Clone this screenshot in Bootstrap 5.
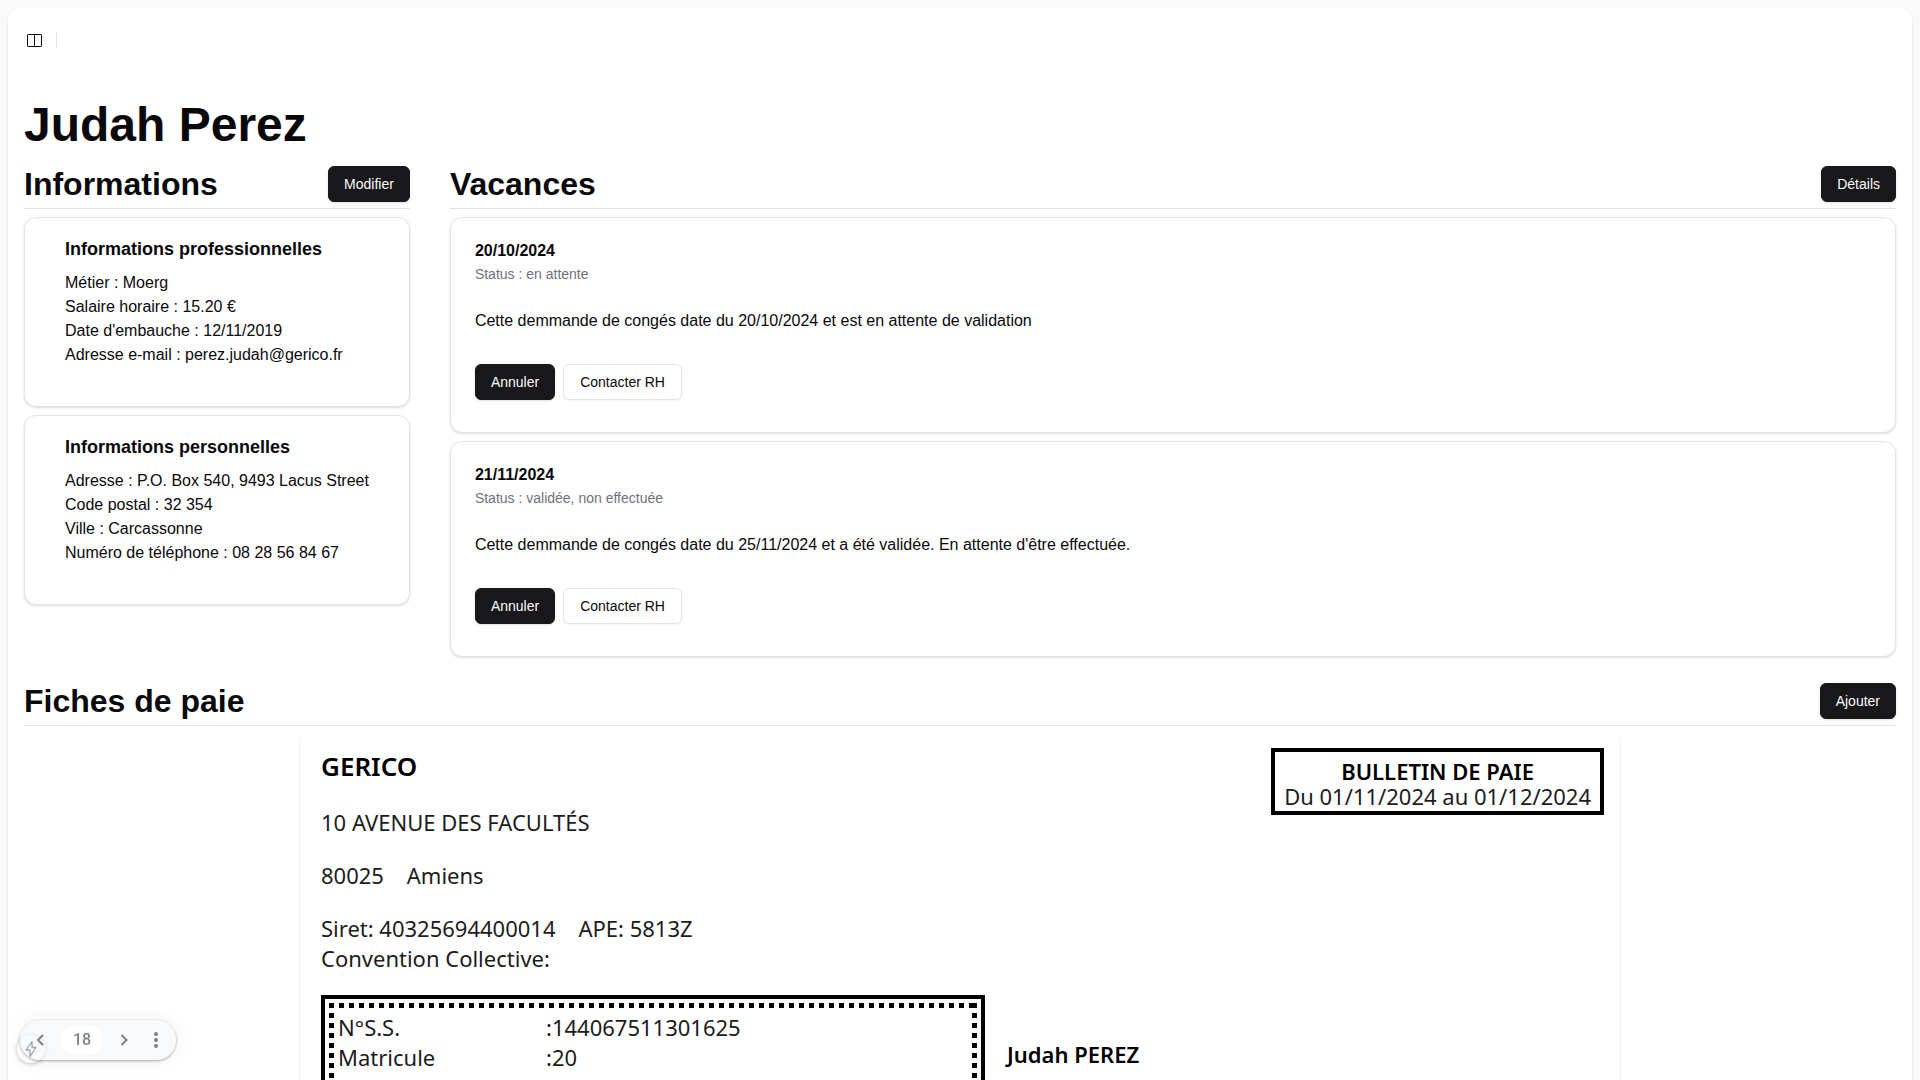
<!DOCTYPE html>
<html lang="fr">
<head>
<meta charset="utf-8">
<meta name="viewport" content="width=device-width, initial-scale=1">
<title>Judah Perez</title>
<link rel="stylesheet" href="https://cdn.jsdelivr.net/npm/bootstrap@5.3.0/dist/css/bootstrap.min.css">
<style>
  body { font-family: "Liberation Sans", Arial, sans-serif; font-size: 16px; line-height: 24px; color: #09090b; background: #fafafa; height: 100vh; overflow: hidden; }
  .app-panel { margin: 8px; border-radius: 12px; background: #fff; box-shadow: 0 1px 3px rgba(0,0,0,.1), 0 1px 2px -1px rgba(0,0,0,.1); }
  .app-header { height: 64px; padding: 0 16px; gap: 8px; }
  .toggle-btn { width: 28px; height: 28px; margin-left: -4px; padding: 0; border: 0; background: none; color: #09090b; }
  .toggle-btn svg { width: 16px; height: 16px; }
  .v-rule { width: 1px; height: 16px; background: #e4e4e7; }
  .app-content { padding: 29px 16px 16px; }
  h1 { font-size: 48px; line-height: 48px; font-weight: 700; margin: 0 0 17px; }
  .section-head { border-bottom: 1px solid #e4e4e7; padding-bottom: 6px; margin-bottom: 8px; }
  h2 { font-size: 32px; line-height: 36px; font-weight: 700; margin: 0; }
  .btn { font-size: 14px; line-height: 20px; padding: 7px 15px; border-radius: 6px; box-shadow: 0 1px 2px rgba(0,0,0,.05); }
  .btn-ink { --bs-btn-color: #fafafa; --bs-btn-bg: #18181b; --bs-btn-border-color: #18181b; --bs-btn-hover-color: #fafafa; --bs-btn-hover-bg: #2f2f31; box-shadow: 0 1px 3px rgba(0,0,0,.1), 0 1px 2px -1px rgba(0,0,0,.1); }
  .btn-line { --bs-btn-color: #09090b; --bs-btn-bg: #fff; --bs-btn-border-color: #e4e4e7; --bs-btn-hover-bg: #f4f4f5; padding: 7px 16px; }
  .card { border: 1px solid #e4e4e7; border-radius: 12px; box-shadow: 0 1px 3px rgba(0,0,0,.1), 0 1px 2px -1px rgba(0,0,0,.1); color: inherit; }
  .columns { gap: 40px; margin-bottom: 26px; }
  .info-card { padding: 17px 40px 39px; }
  .info-card h3 { font-size: 18px; line-height: 28px; font-weight: 700; margin: 0 0 8px; }
  .leave-card { padding: 25px 24px 32px; }
  .leave-card h3 { font-size: 16px; line-height: 16px; font-weight: 700; margin: 0 0 5px; }
  .leave-status { font-size: 14px; line-height: 20px; color: #71717a; margin: 0 0 25px; }
  .leave-text { margin: 0 0 31px; }

  .payslip { width: 1322px; max-width: 100%; margin: 15px auto 0; padding: 7px 16px 0 21px; border: 1px solid #f4f4f5; border-top: 0; font-family: "Noto Sans", "Open Sans", sans-serif; font-size: 22px; line-height: 30px; color: #1c1c1c; }
  .payslip strong { font-weight: 600; color: #000; }
  .company-name { font-size: 26px; line-height: 36px; }
  .issuer p { margin: 0; }
  .issuer .stack-line { margin-top: 23px; }
  .period-box { border: 4px solid #000; padding: 7px 9px 2px; line-height: 25px; }
  .person-row { gap: 22px; margin-top: 22px; }
  .identity { width: 664px; border: 4px solid #000; padding: 4px; }
  .identity dl {
    --dots-x: repeating-linear-gradient(90deg, #000 0 5px, transparent 5px 10px);
    --dots-y: repeating-linear-gradient(#000 0 5px, transparent 5px 10px);
    background: var(--dots-x) top / 100% 5px no-repeat, var(--dots-y) left / 5px 100% no-repeat, var(--dots-y) right / 5px 100% no-repeat;
    padding: 9px; margin: 0; display: grid; grid-template-columns: 208px 1fr;
  }
  .identity dt { font-weight: 400; }
  .identity dd { margin: 0; }
  .person-name { margin-top: 44px; }

  .slide-nav { left: 20px; bottom: 20px; height: 40px; width: 156px; border-radius: 20px; background: rgba(240,243,246,.5); color: #7d828a; box-shadow: 0 1px 3px rgba(0,0,0,.35), 0 0 24px rgba(0,0,0,.06); font-family: Roboto, sans-serif; z-index: 2; }
  .slide-nav button { border: 0; background: none; padding: 0; color: inherit; width: 32px; height: 32px; }
  .slide-nav svg, .flash-btn svg { display: block; margin: auto; }
  .page-no { width: 44px; height: 28px; border-radius: 14px; background: #fff; line-height: 28px; font-weight: 500; }
  .flash-btn { left: 17px; bottom: 17px; width: 28px; height: 28px; border: 0; padding: 0; border-radius: 50%; background: #fff; box-shadow: 0 1px 4px rgba(0,0,0,.25); color: #555; z-index: 1; }
</style>
</head>
<body>
<main class="app-panel">
  <header class="app-header d-flex align-items-center">
    <button class="toggle-btn d-flex align-items-center justify-content-center" type="button" aria-label="Menu">
      <svg viewBox="0 0 16 16" fill="none" stroke="currentColor"><rect x="1.5" y="2.5" width="14" height="12" rx=".6"/><path d="M8.5 2.5v12"/></svg>
    </button>
    <span class="v-rule"></span>
  </header>

  <div class="app-content">
    <h1>Judah Perez</h1>
    <div class="columns d-flex">
      <section class="flex-shrink-0">
        <div class="section-head d-flex justify-content-between align-items-center">
          <h2>Informations</h2>
          <button class="btn btn-ink" type="button">Modifier</button>
        </div>
        <div class="d-flex flex-column gap-2">
          <article class="card info-card">
            <h3>Informations professionnelles</h3>
            <div>Métier : Moerg</div>
            <div>Salaire horaire : 15.20 €</div>
            <div>Date d'embauche : 12/11/2019</div>
            <div>Adresse e-mail : perez.judah@gerico.fr</div>
          </article>
          <article class="card info-card">
            <h3>Informations personnelles</h3>
            <div>Adresse : P.O. Box 540, 9493 Lacus Street</div>
            <div>Code postal : 32 354</div>
            <div>Ville : Carcassonne</div>
            <div>Numéro de téléphone : 08 28 56 84 67</div>
          </article>
        </div>
      </section>

      <section class="flex-grow-1">
        <div class="section-head d-flex justify-content-between align-items-center">
          <h2>Vacances</h2>
          <button class="btn btn-ink" type="button">Détails</button>
        </div>
        <div class="d-flex flex-column gap-2">
          <article class="card leave-card">
            <h3>20/10/2024</h3>
            <p class="leave-status">Status : en attente</p>
            <p class="leave-text">Cette demmande de congés date du 20/10/2024 et est en attente de validation</p>
            <div class="d-flex gap-2">
              <button class="btn btn-ink" type="button">Annuler</button>
              <button class="btn btn-line" type="button">Contacter RH</button>
            </div>
          </article>
          <article class="card leave-card">
            <h3>21/11/2024</h3>
            <p class="leave-status">Status : validée, non effectuée</p>
            <p class="leave-text">Cette demmande de congés date du 25/11/2024 et a été validée. En attente d'être effectuée.</p>
            <div class="d-flex gap-2">
              <button class="btn btn-ink" type="button">Annuler</button>
              <button class="btn btn-line" type="button">Contacter RH</button>
            </div>
          </article>
        </div>
      </section>
    </div>

    <section>
      <div class="section-head d-flex justify-content-between align-items-center">
        <h2>Fiches de paie</h2>
        <button class="btn btn-ink" type="button">Ajouter</button>
      </div>
      <article class="payslip">
        <div class="d-flex justify-content-between align-items-start">
          <div class="issuer">
            <p class="company-name"><strong>GERICO</strong></p>
            <p class="stack-line">10 AVENUE DES FACULTÉS</p>
            <p class="stack-line">80025 &nbsp;&nbsp; Amiens</p>
            <p class="stack-line">Siret: 40325694400014 &nbsp;&nbsp; APE: 5813Z</p>
            <p>Convention Collective:</p>
          </div>
          <div class="period-box text-center">
            <strong class="d-block">BULLETIN DE PAIE</strong>
            Du 01/11/2024 au 01/12/2024
          </div>
        </div>
        <div class="person-row d-flex align-items-start">
          <div class="identity">
            <dl>
              <dt>N°S.S.</dt><dd>:144067511301625</dd>
              <dt>Matricule</dt><dd>:20</dd>
            </dl>
          </div>
          <strong class="person-name">Judah PEREZ</strong>
        </div>
      </article>
    </section>
  </div>
</main>

<nav class="slide-nav position-fixed d-flex align-items-center" aria-label="Pages">
  <button type="button" aria-label="Précédent" class="ms-1"><svg width="16" height="16" viewBox="0 0 16 16" fill="none" stroke="currentColor" stroke-width="2"><path d="M11 3 6 8l5 5"/></svg></button>
  <span class="page-no text-center ms-1">18</span>
  <button type="button" aria-label="Suivant" class="ms-1"><svg width="16" height="16" viewBox="0 0 16 16" fill="none" stroke="currentColor" stroke-width="2"><path d="m5.500 3 5 5-5 5"/></svg></button>
  <button type="button" aria-label="Plus"><svg width="16" height="16" viewBox="0 0 16 16" fill="currentColor"><circle cx="8" cy="2" r="2"/><circle cx="8" cy="8" r="2"/><circle cx="8" cy="14" r="2"/></svg></button>
</nav>
<button class="flash-btn position-fixed" type="button" aria-label="Raccourcis">
  <svg width="16" height="18" viewBox="0 0 16 18" fill="none" stroke="currentColor" stroke-width="1.300" stroke-linejoin="round"><path d="M9 1.500 3 10h4v6.500L13 7.500H9z"/></svg>
</button>
<script src="https://cdn.jsdelivr.net/npm/bootstrap@5.3.0/dist/js/bootstrap.bundle.min.js"></script>
</body>
</html>
